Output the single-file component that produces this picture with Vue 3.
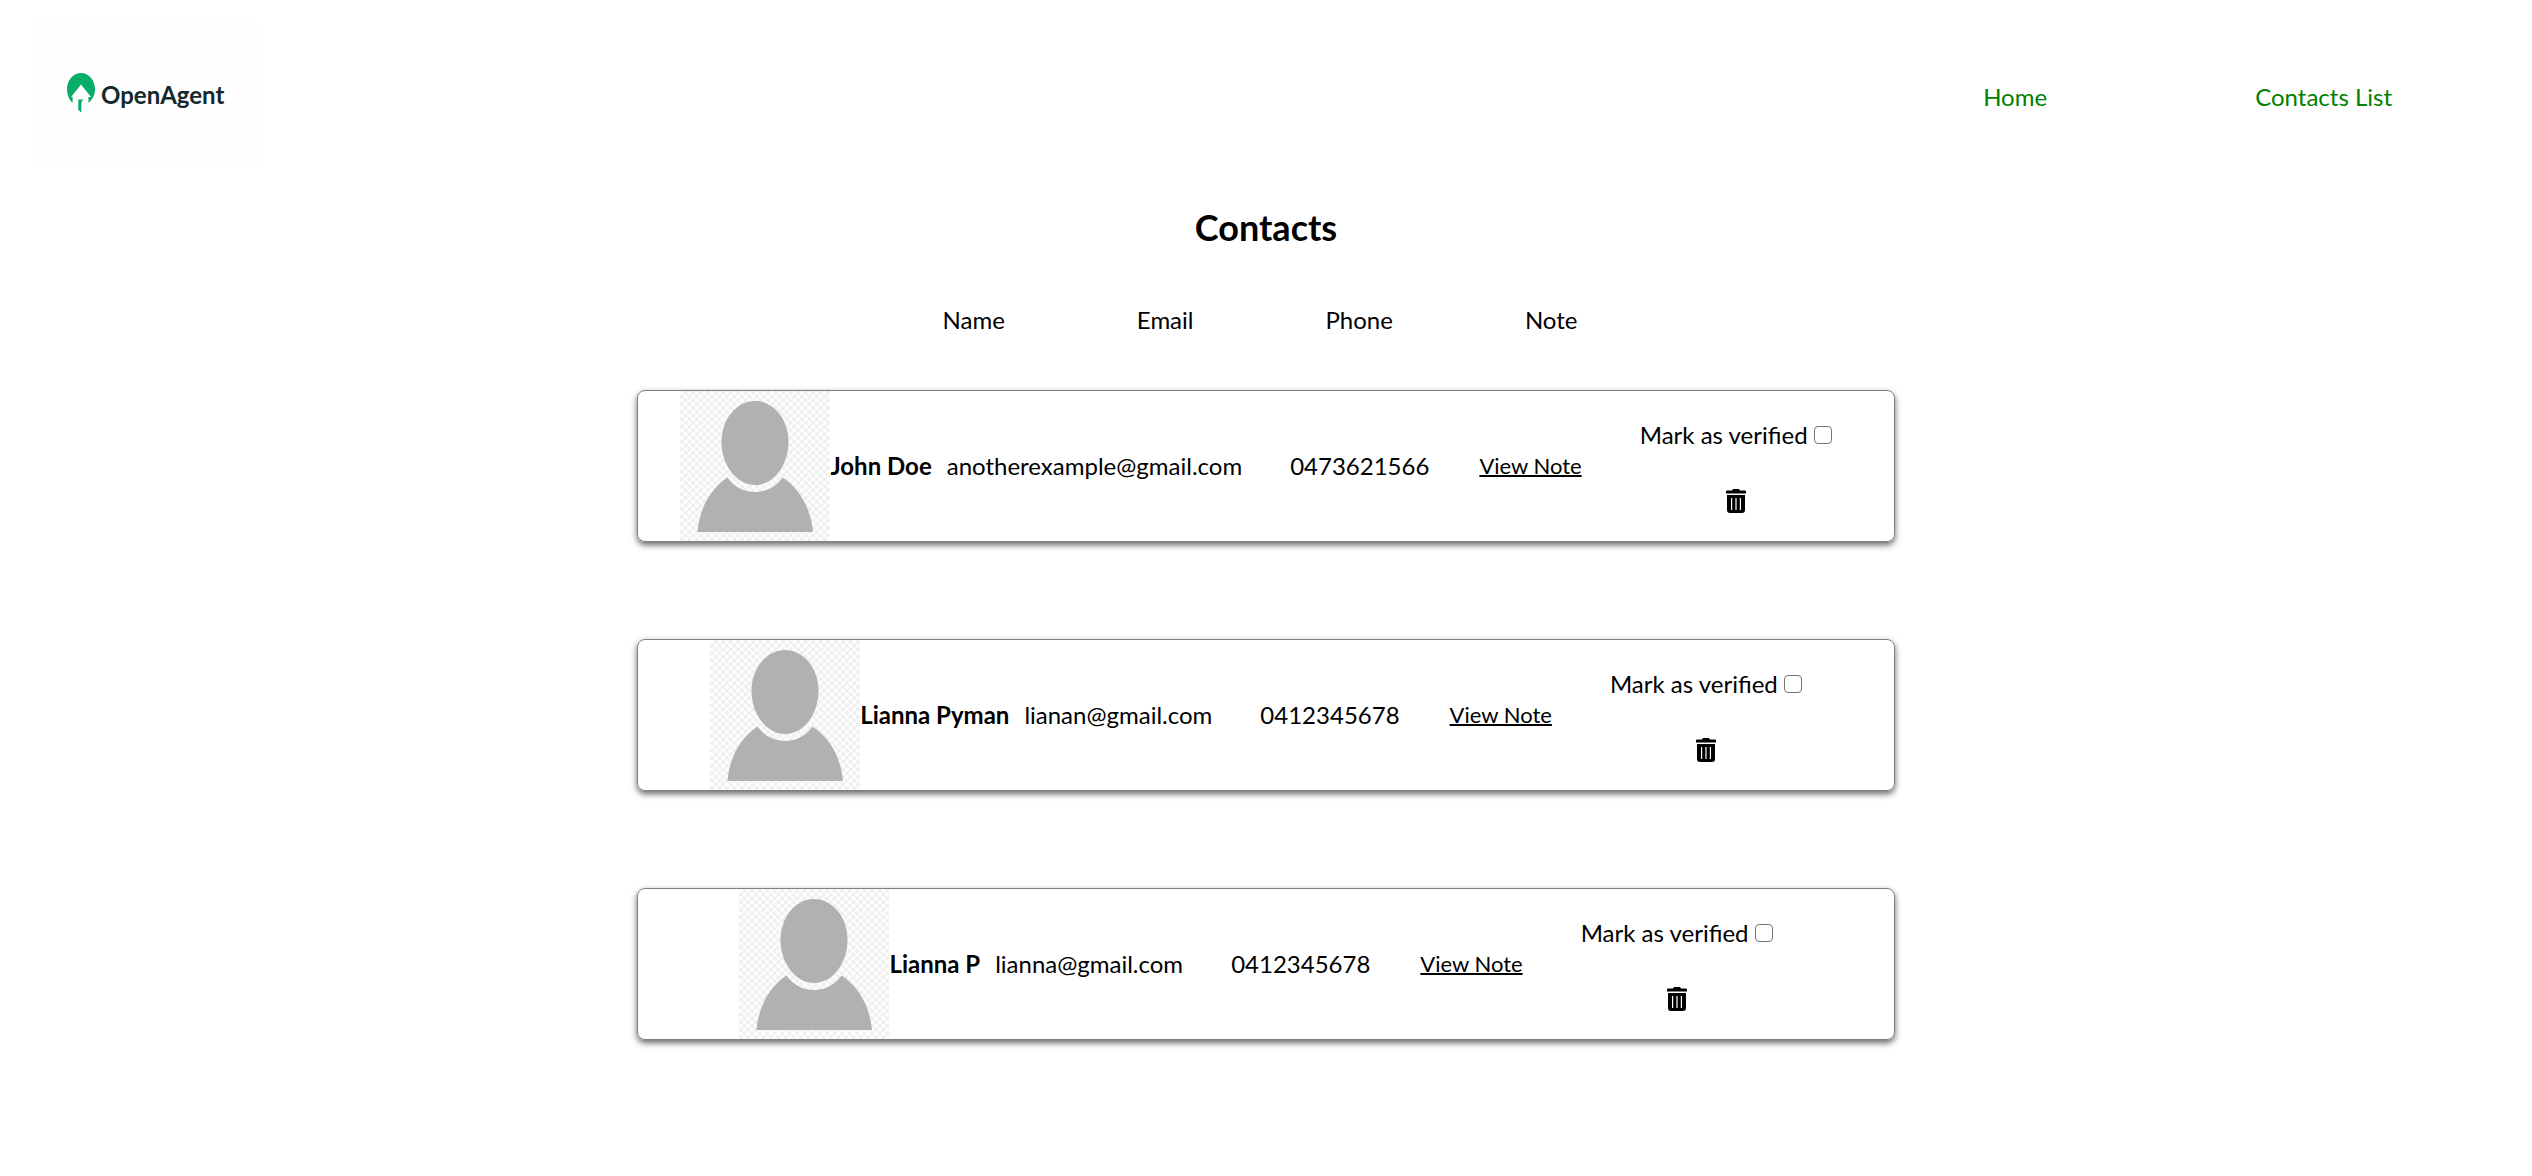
<script setup>
import { ref } from 'vue'

const columns = ['Name', 'Email', 'Phone', 'Note']

const contacts = ref([
  { id: 1, name: 'John Doe', email: 'anotherexample@gmail.com', phone: '0473621566', verified: false },
  { id: 2, name: 'Lianna Pyman', email: 'lianan@gmail.com', phone: '0412345678', verified: false },
  { id: 3, name: 'Lianna P', email: 'lianna@gmail.com', phone: '0412345678', verified: false }
])

function removeContact(id) {
  contacts.value = contacts.value.filter((contact) => contact.id !== id)
}
</script>

<template>
  <div class="app">
    <header class="header">
      <a class="logo" href="#" aria-label="OpenAgent">
        <svg class="logo-mark" viewBox="0 0 28 40" aria-hidden="true">
          <path fill="#08ad67" d="M14 0C6.300 0 0 7.200 0 16c0 5.900 2.200 11 5.600 13.800V24H4l10-12.500L24 24h-2.600v5.800C25.400 27 28 21.900 28 16 28 7.200 21.700 0 14 0z" />
          <path fill="#08ad67" d="M11.300 26.500h5c-1.300 1.200-1.900 2.500-1.900 4V39.500l-3.100-2.600z" />
        </svg>
        <span class="logo-text">OpenAgent</span>
      </a>
      <nav class="nav">
        <a class="nav-link" href="#">Home</a>
        <a class="nav-link" href="#">Contacts List</a>
      </nav>
    </header>

    <main>
      <h2 class="title">Contacts</h2>

      <div class="columns">
        <span v-for="column in columns" :key="column">{{ column }}</span>
      </div>

      <ul class="cards">
        <li v-for="contact in contacts" :key="contact.id" class="card">
          <svg class="avatar" viewBox="0 0 150 150" role="img" :aria-label="contact.name">
            <defs>
              <pattern :id="`checks-${contact.id}`" width="7.5" height="7.5" patternUnits="userSpaceOnUse">
                <rect width="7.5" height="7.5" fill="#fdfdfd" />
                <rect x="3.75" width="3.75" height="3.75" fill="#efefef" />
                <rect y="3.75" width="3.75" height="3.75" fill="#efefef" />
              </pattern>
            </defs>
            <rect width="150" height="150" :fill="`url(#checks-${contact.id})`" />
            <path fill="#b2b1af" d="M75 10c18.500 0 33.500 18 33.500 41S93.500 94 75 94 41.500 74 41.500 51 56.500 10 75 10z" />
            <path fill="#b2b1af" d="M47.500 86.500C54 96 64 101 75 101s21-5 27.500-14.500C119 97 131 117 133 141H17.500C19.500 117 31 97 47.500 86.500z" />
          </svg>
          <strong class="name">{{ contact.name }}</strong>
          <span class="email">{{ contact.email }}</span>
          <span class="phone">{{ contact.phone }}</span>
          <button class="note" type="button">View Note</button>
          <div class="actions">
            <label class="verify">
              Mark as verified
              <input v-model="contact.verified" class="check" type="checkbox" />
            </label>
            <button class="delete" type="button" aria-label="Delete contact" @click="removeContact(contact.id)">
              <svg class="trash" viewBox="0 0 20 24" aria-hidden="true">
                <path fill="#000" d="M6 1.500 7 0h6l1 1.500h5q1 0 1 1V4q0 .5-.5.5H.5Q0 4.500 0 4V2.500q0-1 1-1z" />
                <path fill="#000" fill-rule="evenodd" d="M1 6h18v15a3 3 0 0 1-3 3H4a3 3 0 0 1-3-3zM5 9v12h1.200V9zM9.400 9v12h1.200V9zM13.800 9v12H15V9z" />
              </svg>
            </button>
          </div>
        </li>
      </ul>
    </main>
  </div>
</template>

<style>
body {
  margin: 0;
  background: #fff;
}
</style>

<style scoped>
.app {
  padding: 18px 8px 97px;
  font-family: Lato, "Noto Sans", sans-serif;
  font-size: 24px;
  line-height: 32px;
  color: #000;
}

.header {
  display: flex;
  align-items: center;
  justify-content: space-between;
  min-height: 158px;
  padding: 0 132px 0 25px;
}

.logo {
  display: flex;
  align-self: flex-start;
  align-items: center;
  gap: 6px;
  box-sizing: border-box;
  width: 225px;
  height: 150px;
  padding-left: 34px;
  background: #fefefe;
  color: #12292d;
  text-decoration: none;
}

.logo-mark {
  width: 28px;
  height: 40px;
}

.logo-text {
  padding-top: 4px;
  font-weight: 700;
}

.nav {
  display: flex;
  gap: 208px;
}

.nav-link {
  color: green;
  text-decoration: none;
}

.title {
  margin: 27px 0 53px;
  font-size: 36px;
  font-weight: 700;
  line-height: 48px;
  text-align: center;
}

.columns {
  display: flex;
  justify-content: center;
  gap: 132px;
  padding-right: 12px;
}

.cards {
  display: flex;
  flex-direction: column;
  align-items: center;
  gap: 97px;
  margin: 54px 0 0;
  padding: 0;
  list-style: none;
}

.card {
  display: flex;
  align-items: center;
  justify-content: center;
  box-sizing: border-box;
  width: 50%;
  border: 1px solid #808080;
  border-radius: 8px;
  box-shadow: 0 3px 6px rgba(0, 0, 0, 0.6);
  white-space: nowrap;
}

.avatar {
  width: 150px;
  height: 150px;
}

.email {
  margin-left: 15px;
}

.phone {
  margin: 0 50px 0 48px;
}

.note,
.delete {
  padding: 0;
  border: 0;
  background: none;
  color: inherit;
  font: inherit;
  cursor: pointer;
}

.note {
  font-size: 22px;
  text-decoration: underline;
  text-decoration-thickness: 2px;
}

.actions {
  display: flex;
  flex-direction: column;
  align-items: center;
  gap: 38px;
  margin: 0 20px 0 58px;
}

.verify {
  display: flex;
  align-items: center;
  gap: 6px;
}

.check {
  appearance: none;
  width: 18px;
  height: 18px;
  margin: 0;
  border: 1px solid #767676;
  border-radius: 4px;
  background: #fff;
}

.check:checked {
  background: #0075ff;
}

.delete {
  display: flex;
}

.trash {
  width: 20px;
  height: 24px;
}
</style>
